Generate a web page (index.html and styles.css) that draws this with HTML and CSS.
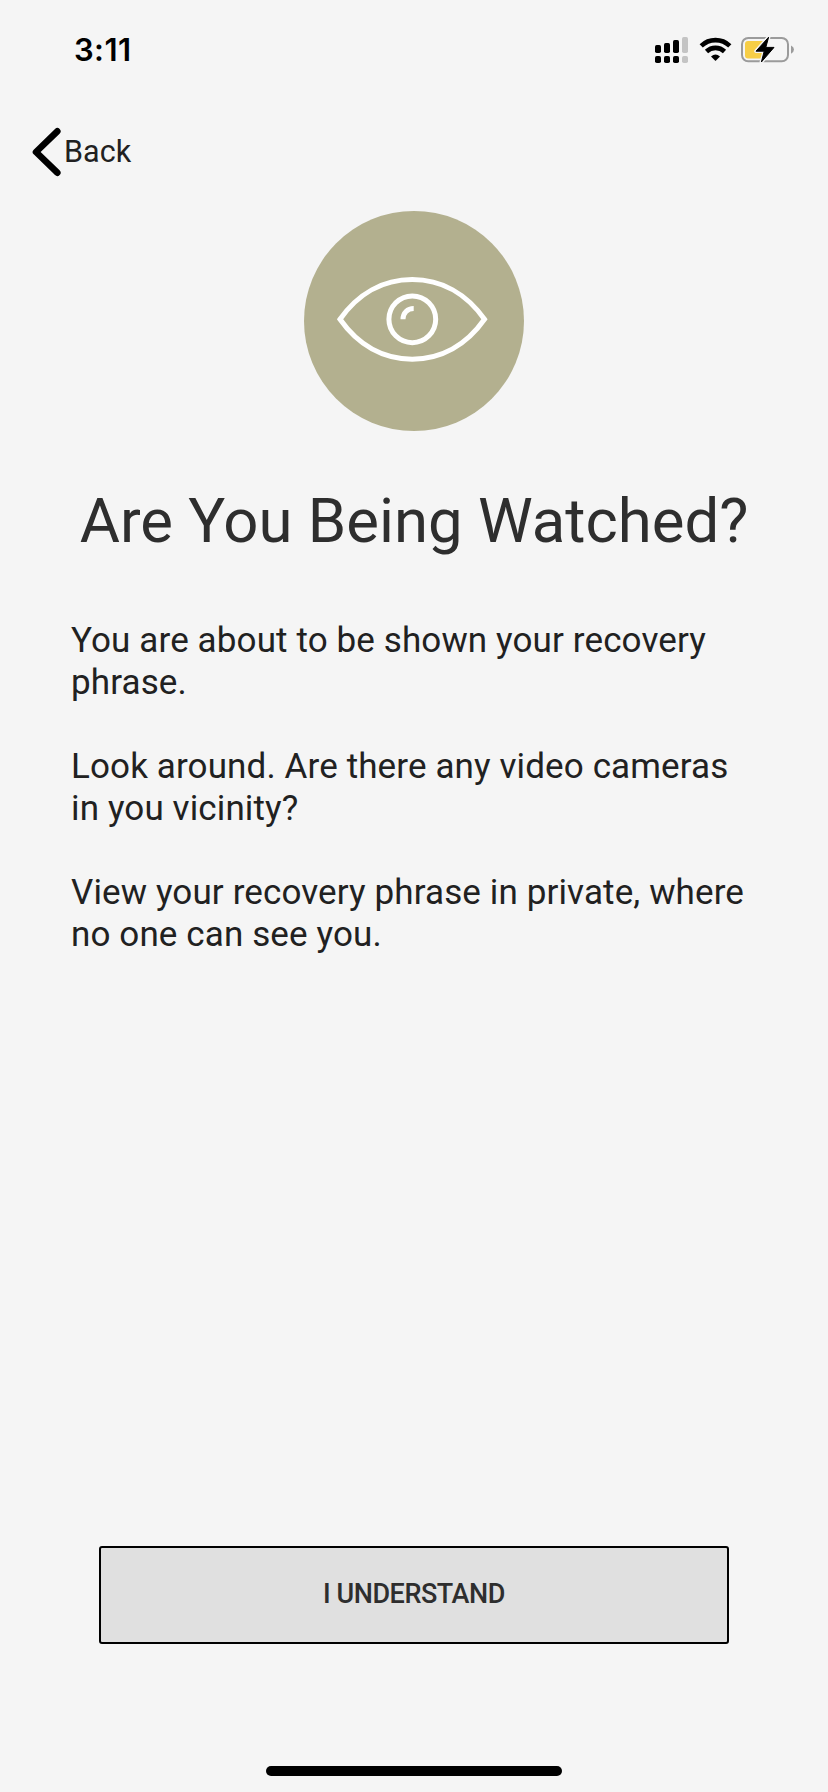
FILE: index.html
```html
<!DOCTYPE html>
<html lang="en">
<head>
<meta charset="utf-8">
<title>Are You Being Watched?</title>
<link rel="stylesheet" href="styles.css">
</head>
<body>
<div class="screen">
  <header class="status-bar">
    <time class="clock">3:11</time>
    <svg class="status-icons" width="140" height="28" viewBox="655 36 140 28" aria-hidden="true">
      <g>
        <rect x="655" y="45" width="6" height="8" rx="1.7"/>
        <rect x="664" y="43" width="6" height="10" rx="1.7"/>
        <rect x="673" y="40" width="6" height="13" rx="1.7"/>
        <rect x="682" y="37" width="6" height="16" rx="1.7" fill="#c4c4c4"/>
        <rect x="655" y="56" width="6" height="7" rx="1.8"/>
        <rect x="664" y="56" width="6" height="7" rx="1.8"/>
        <rect x="673" y="56" width="6" height="7" rx="1.8"/>
        <rect x="682" y="56" width="6" height="7" rx="1.8" fill="#c4c4c4"/>
      </g>
      <g fill="none" stroke="#000" stroke-width="4.6">
        <path d="M701.2 45.9A20.6 20.6 0 0 1 729.8 45.9"/>
        <path d="M706.5 51.5A13 13 0 0 1 724.5 51.5"/>
      </g>
      <path d="M711 56.4Q715.5 52.6 720 56.4L716 60.6Q715.5 61.1 715 60.6Z"/>
      <rect x="742" y="38" width="46" height="23.3" rx="6.2" fill="none" stroke="#9b9b9b" stroke-width="2"/>
      <path d="M791 45.5Q794 46.9 794 49.6T791 53.7Z" fill="#9b9b9b"/>
      <rect x="745" y="41" width="22" height="17.5" rx="3" fill="#f7ce46"/>
      <path d="M768.6 37.2L756 51.2H764.2L761.4 62L774 47.4H765.8Z" stroke="#f5f5f5" stroke-width="3.6" stroke-linejoin="round"/>
      <path d="M768.6 37.2L756 51.2H764.2L761.4 62L774 47.4H765.8Z" stroke="#000" stroke-width="1" stroke-linejoin="round"/>
    </svg>
  </header>

  <nav class="nav">
    <a class="back">
      <svg class="chevron" width="32" height="50" viewBox="0 0 32 50" aria-hidden="true"><path d="M27.3 4.3L6 25L27.3 45.7" fill="none" stroke="#000" stroke-width="6.6" stroke-linecap="round" stroke-linejoin="round"/></svg>
      <span class="back-label">Back</span>
    </a>
  </nav>

  <main class="content">
    <div class="badge">
      <svg width="220" height="220" viewBox="304 211 220 220" fill="none" stroke="#fff" stroke-width="5" aria-hidden="true">
        <path d="M340 319.3C358 293.8 383 279.6 412.2 279.6S466.5 293.8 484.5 319.3C466.5 344.8 441.4 359.2 412.2 359.2S358 344.8 340 319.3Z"/>
        <circle cx="412.3" cy="319.3" r="23.4"/>
        <path d="M403 319.3C403 313 407.5 308.5 413.7 308.5"/>
      </svg>
    </div>
    <h1 class="title">Are You Being Watched?</h1>
    <div class="copy">
      <p>You are about to be shown your recovery<br>phrase.</p>
      <p>Look around. Are there any video cameras<br>in you vicinity?</p>
      <p>View your recovery phrase in private, where<br>no one can see you.</p>
    </div>
  </main>

  <footer class="footer">
    <button class="confirm" type="button">I UNDERSTAND</button>
    <div class="home-indicator"></div>
  </footer>
</div>
</body>
</html>
```
FILE: styles.css
```css
* { box-sizing: border-box; }

body {
  margin: 0;
  background: #f5f5f5;
  color: #212121;
  font-family: Roboto, "Liberation Sans", sans-serif;
}

.screen {
  display: flex;
  flex-direction: column;
  width: 828px;
  height: 1792px;
  overflow: hidden;
}

.status-bar {
  display: flex;
  justify-content: space-between;
  align-items: center;
  height: 100px;
  padding: 0 33px 0 74px;
}

.clock {
  color: #000;
  font: 600 31px/40px Inter, sans-serif;
  letter-spacing: 0.4px;
}

.nav {
  height: 111px;
  padding: 27px 0 0 30px;
}

.back {
  display: inline-flex;
  align-items: center;
  gap: 2px;
}

.chevron { display: block; }

.back-label {
  font-size: 30.5px;
  line-height: 50px;
  letter-spacing: 0.1px;
}

.content {
  display: flex;
  flex-direction: column;
  align-items: center;
  flex: 1;
}

.badge {
  width: 220px;
  height: 220px;
  border-radius: 50%;
  background: #b3b08f;
}

.badge svg { display: block; }

.title {
  margin: 54px 0 0;
  color: #2e2e2e;
  font-size: 61.7px;
  font-weight: 400;
  line-height: 72px;
  white-space: nowrap;
}

.copy {
  display: flex;
  flex-direction: column;
  gap: 42px;
  width: 100%;
  margin-top: 63px;
  padding-left: 71px;
  font-size: 35px;
  line-height: 42px;
  letter-spacing: 0.12px;
  white-space: nowrap;
}

.copy p { margin: 0; }

.footer {
  display: flex;
  flex-direction: column;
  align-items: center;
  justify-content: space-between;
  height: 246px;
  padding-bottom: 16px;
}

.confirm {
  width: 630px;
  height: 98px;
  padding: 0 0 2px;
  border: 2px solid #000;
  border-radius: 3px;
  background: #e0e0e0;
  color: #2e2e2e;
  font: 500 27px/32px Roboto, "Liberation Sans", sans-serif;
  letter-spacing: -0.45px;
}

.home-indicator {
  width: 296px;
  height: 10px;
  border-radius: 5px;
  background: #000;
}
```
